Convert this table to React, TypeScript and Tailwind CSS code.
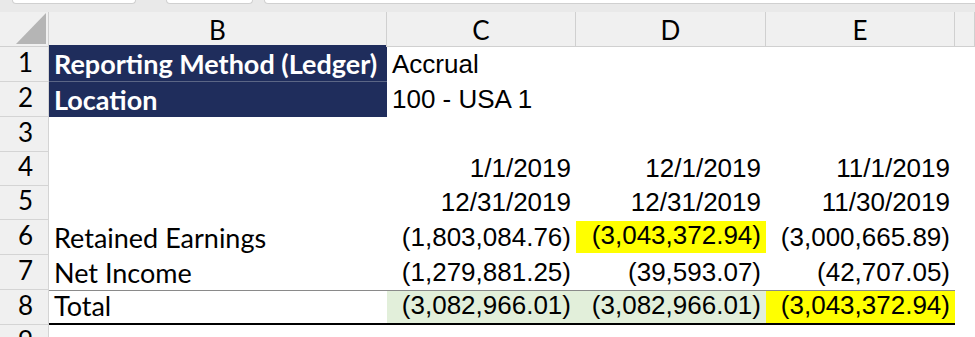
import React from "react";

const aptos = { fontFamily: "Lato, 'Open Sans', sans-serif" };
const arial = { fontFamily: "'Liberation Sans', Arial, sans-serif" };

function RowHead({ n, h }: { n: string; h: string }) {
  return (
    <div
      className={`${h} flex items-end justify-center pb-[4px] pl-[3px] bg-[#f0f0f0] border-b border-r border-[#d4d4d4] text-[26px] leading-none text-black`}
      style={aptos}
    >
      <span className="pb-[2px]">{n}</span>
    </div>
  );
}

function Num({
  v,
  h,
  bg = "",
  extra = "",
}: {
  v: string;
  h: string;
  bg?: string;
  extra?: string;
}) {
  return (
    <div
      className={`${h} ${bg} ${extra} flex items-end justify-end pr-[5px] pb-[5px] text-[26px] leading-none text-black whitespace-nowrap`}
      style={arial}
    >
      {v}
    </div>
  );
}

function Label({ v, h, extra = "" }: { v: string; h: string; extra?: string }) {
  return (
    <div
      className={`${h} ${extra} flex items-end pl-[5px] pb-[4px] text-[27px] leading-none text-black whitespace-nowrap`}
      style={aptos}
    >
      {v}
    </div>
  );
}

export default function App() {
  const rows = ["h-[35px]", "h-[35px]", "h-[35px]", "h-[34px]", "h-[34px]", "h-[35px]", "h-[35px]", "h-[35px]"];
  const total = "border-t border-b-2 border-t-[#8a8a8a] border-b-black";
  return (
    <div className="w-[975px] h-[337px] overflow-hidden bg-white">
      {/* top strip */}
      <div className="relative h-[12px] bg-[#e9e9e9]">
        <div className="absolute left-[12px] top-0 w-[124px] h-[4px] bg-white border border-t-0 border-[#d0d0d0] rounded-b-[5px]" />
        <div className="absolute left-[166px] top-0 w-[87px] h-[4px] bg-white border border-t-0 border-[#d0d0d0] rounded-b-[5px]" />
        <div className="absolute left-[264px] top-0 w-[720px] h-[4px] bg-white border border-t-0 border-[#d0d0d0] rounded-bl-[5px]" />
      </div>
      <div className="grid grid-cols-[49px_338px_189px_190px_189px_1fr]">
        {/* header row */}
        <div className="h-[35px] bg-[#f0f0f0] border-r border-b border-[#d0d0d0] flex items-end justify-end pr-[2px] pb-[2px]">
          <svg width="30" height="31" viewBox="0 0 30 31">
            <polygon points="30,0 30,31 0,31" fill="#b5b5b5" />
          </svg>
        </div>
        {["B", "C", "D", "E", ""].map((c, i) => (
          <div
            key={i}
            className="relative h-[35px] bg-[#f0f0f0] border-r border-b border-[#d0d0d0] flex items-end justify-center pb-[2px] text-[26px] leading-none text-black"
            style={aptos}
          >
            <span className="pb-[1px]">{c}</span>
            {c === "B" && <div className="absolute left-0 right-0 bottom-[-1px] h-[2px] bg-[#1f2d5c]" />}
          </div>
        ))}

        {/* row 1 */}
        <RowHead n="1" h={rows[0]} />
        <div
          className={`${rows[0]} bg-[#1f2d5c] border-b border-[#5b6686] flex items-end pl-[5px] pb-[4px] text-[27px] leading-none font-bold text-white whitespace-nowrap`}
          style={aptos}
        >
          Reporting Method (Ledger)
        </div>
        <div
          className={`${rows[0]} flex items-end pl-[5px] pb-[5px] text-[26px] leading-none text-black whitespace-nowrap`}
          style={arial}
        >
          Accrual
        </div>
        <div className={rows[0]} />
        <div className={rows[0]} />
        <div className={rows[0]} />

        {/* row 2 */}
        <RowHead n="2" h={rows[1]} />
        <div
          className={`${rows[1]} bg-[#1f2d5c] flex items-end pl-[5px] pb-[4px] text-[27px] leading-none font-bold text-white whitespace-nowrap`}
          style={aptos}
        >
          Location
        </div>
        <div
          className={`${rows[1]} flex items-end pl-[5px] pb-[5px] text-[26px] leading-none text-black whitespace-nowrap`}
          style={arial}
        >
          100 - USA 1
        </div>
        <div className={rows[1]} />
        <div className={rows[1]} />
        <div className={rows[1]} />

        {/* row 3 */}
        <RowHead n="3" h={rows[2]} />
        <div className={rows[2]} />
        <div className={rows[2]} />
        <div className={rows[2]} />
        <div className={rows[2]} />
        <div className={rows[2]} />

        {/* row 4 */}
        <RowHead n="4" h={rows[3]} />
        <div className={rows[3]} />
        <Num v="1/1/2019" h={rows[3]} />
        <Num v="12/1/2019" h={rows[3]} />
        <Num v="11/1/2019" h={rows[3]} />
        <div className={rows[3]} />

        {/* row 5 */}
        <RowHead n="5" h={rows[4]} />
        <div className={rows[4]} />
        <Num v="12/31/2019" h={rows[4]} />
        <Num v="12/31/2019" h={rows[4]} />
        <Num v="11/30/2019" h={rows[4]} />
        <div className={rows[4]} />

        {/* row 6 */}
        <RowHead n="6" h={rows[5]} />
        <Label v="Retained Earnings" h={rows[5]} />
        <Num v="(1,803,084.76)" h={rows[5]} />
        <Num v="(3,043,372.94)" h={rows[5]} bg="bg-[#ffff00]" extra="mt-[1px] mb-[2px] h-auto" />
        <Num v="(3,000,665.89)" h={rows[5]} />
        <div className={rows[5]} />

        {/* row 7 */}
        <RowHead n="7" h={rows[6]} />
        <Label v="Net Income" h={rows[6]} />
        <Num v="(1,279,881.25)" h={rows[6]} />
        <Num v="(39,593.07)" h={rows[6]} />
        <Num v="(42,707.05)" h={rows[6]} />
        <div className={rows[6]} />

        {/* row 8 */}
        <RowHead n="8" h={rows[7]} />
        <Label v="Total" h={rows[7]} extra={total} />
        <Num v="(3,082,966.01)" h={rows[7]} bg="bg-[#e2efda]" extra={total} />
        <Num v="(3,082,966.01)" h={rows[7]} bg="bg-[#e2efda]" extra={total} />
        <Num v="(3,043,372.94)" h={rows[7]} bg="bg-[#ffff00]" extra={total} />
        <div className={rows[7]} />

        {/* row 9 */}
        <RowHead n="9" h={rows[0]} />
        <div className={rows[0]} />
        <div className={rows[0]} />
        <div className={rows[0]} />
        <div className={rows[0]} />
        <div className={rows[0]} />
      </div>
    </div>
  );
}
